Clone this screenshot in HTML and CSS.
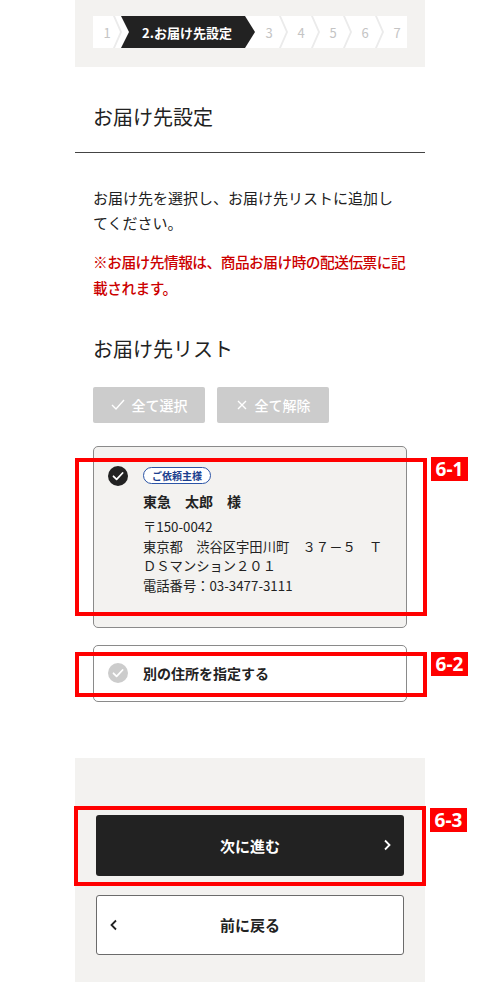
FILE: index.html
```html
<!DOCTYPE html>
<html lang="ja">
  <head>
    <meta charset="utf8" />
    <title>お届け先設定</title>
    <link rel="stylesheet" href="styles.css">
  </head>
  <body>
    <div class="page">
      <div class="step-band">
        <ol class="stepper">
          <li class="step step-first">1</li>
          <li class="step step-active">2.お届け先設定</li>
          <li class="step">3</li>
          <li class="step">4</li>
          <li class="step">5</li>
          <li class="step">6</li>
          <li class="step step-last">7</li>
        </ol>
      </div>

      <h1 class="page-title">お届け先設定</h1>

      <div class="content">
        <p class="lead">お届け先を選択し、お届け先リストに追加してください。</p>
        <p class="notice">※お届け先情報は、商品お届け時の配送伝票に記載されます。</p>

        <h2 class="list-title">お届け先リスト</h2>

        <div class="bulk-actions">
          <button class="bulk-btn">
            <svg width="14" height="12" viewBox="0 0 14 12"><polyline points="1,6 5,10 13,1" /></svg>
            全て選択
          </button>
          <button class="bulk-btn">
            <svg width="12" height="12" viewBox="0 0 12 12"><path d="M2 2 L10 10 M10 2 L2 10" /></svg>
            全て解除
          </button>
        </div>

        <div class="address-card selected">
          <svg class="check" width="20" height="20" viewBox="0 0 20 20">
            <circle cx="10" cy="10" r="10" />
            <polyline points="5.5,10.3 8.6,13.3 14.6,7" />
          </svg>
          <div class="address-body">
            <span class="badge">ご依頼主様</span>
            <p class="name">東急　太郎　様</p>
            <p class="address">〒150-0042<br>東京都　渋谷区宇田川町　３７－５　ＴＤＳマンション２０１<br>電話番号：03-3477-3111</p>
          </div>
          <span class="note-box note-card1"></span>
          <span class="note-label note-card1-label">6-1</span>
        </div>

        <div class="address-card other">
          <svg class="check check-off" width="20" height="20" viewBox="0 0 20 20">
            <circle cx="10" cy="10" r="10" />
            <polyline points="5.5,10.3 8.6,13.3 14.6,7" />
          </svg>
          <span class="other-text">別の住所を指定する</span>
          <span class="note-box note-card2"></span>
          <span class="note-label note-card2-label">6-2</span>
        </div>
      </div>

      <div class="footer-actions">
        <div class="next-wrap">
          <button class="btn-next">
            次に進む
            <svg class="chev chev-right" width="8" height="12" viewBox="0 0 8 12"><polyline points="2,1.5 6.5,6 2,10.5" /></svg>
          </button>
          <span class="note-box note-next"></span>
          <span class="note-label note-next-label">6-3</span>
        </div>
        <button class="btn-back">
          <svg class="chev chev-left" width="8" height="12" viewBox="0 0 8 12"><polyline points="6,1.5 1.5,6 6,10.5" /></svg>
          前に戻る
        </button>
      </div>
    </div>
  </body>
</html>
```

FILE: styles.css
```css
body {
  margin: 0;
  background: #fff;
  color: #222;
  font-family: "Noto Sans CJK JP", "Noto Sans", sans-serif;
}

.page {
  width: 350px;
  margin: 0 auto;
}

/* step indicator */
.step-band {
  background: #f3f2f0;
  padding: 16px 18px 19px;
}
.stepper {
  display: flex;
  margin: 0;
  padding: 0;
  list-style: none;
  height: 32px;
  background: #fff;
}
.step {
  position: relative;
  flex: 0 0 32px;
  display: flex;
  align-items: center;
  justify-content: center;
  box-sizing: border-box;
  color: #c4c4c4;
  font-size: 13px;
  padding-right: 4px;
}
.step::after {
  content: '';
  position: absolute;
  right: -1px;
  top: 0;
  width: 9px;
  height: 100%;
  background: #ebebeb;
  clip-path: polygon(0 0, 2px 0, 9px 50%, 2px 100%, 0 100%, 7px 50%);
}
.step-last {
  flex: 1;
  padding: 0 0 0 4px;
}
.step-last::after {
  display: none;
}
.step-first {
  flex: 0 0 28px;
  padding: 0;
}
.step-active {
  flex: 0 0 134px;
  padding: 0 2px 0 0;
  background: #222;
  color: #fff;
  font-weight: bold;
  clip-path: polygon(0 0, 124px 0, 134px 50%, 124px 100%, 0 100%, 8px 50%);
}
.step-active::after {
  display: none;
}

/* heading */
.page-title {
  margin: 0;
  padding: 35px 18px 20px;
  font-size: 20px;
  line-height: 30px;
  font-weight: normal;
  border-bottom: 1px solid #444;
}

.content {
  padding: 0 18px;
}
.lead {
  margin: 32px 4px 0 0;
  font-size: 15px;
  line-height: 25px;
}
.notice {
  margin: 14px -4px 0 0;
  font-size: 14.7px;
  letter-spacing: -0.5px;
  line-height: 26px;
  color: #cc0000;
  font-weight: 500;
}
.list-title {
  margin: 33px 0 0;
  font-size: 20px;
  line-height: 30px;
  font-weight: normal;
}

.bulk-actions {
  display: flex;
  gap: 12px;
  margin-top: 23px;
}
.bulk-btn {
  width: 112px;
  height: 36px;
  display: flex;
  align-items: center;
  justify-content: center;
  gap: 7px;
  border: none;
  border-radius: 2px;
  background: #cccccc;
  color: #fff;
  font-family: inherit;
  font-size: 14px;
  font-weight: 500;
  padding: 0;
}
.bulk-btn svg {
  fill: none;
  stroke: #fff;
  stroke-width: 1.4;
}

/* address cards */
.address-card {
  position: relative;
  display: flex;
  gap: 15px;
  border: 1px solid #8a8a8a;
  border-radius: 5px;
}
.address-card.selected {
  margin-top: 23px;
  padding: 19px 18px 31px 14px;
  background: #f3f2f0;
  align-items: flex-start;
}
.address-card.other {
  margin-top: 17px;
  height: 57px;
  box-sizing: border-box;
  padding: 0 18px 0 14px;
  align-items: center;
  background: #fff;
}
.check {
  flex: none;
}
.check circle {
  fill: #222;
}
.check polyline {
  fill: none;
  stroke: #fff;
  stroke-width: 1.8;
  stroke-linecap: round;
  stroke-linejoin: round;
}
.check-off circle {
  fill: #cccccc;
}
.address-body {
  flex: 1;
}
.badge {
  display: block;
  width: fit-content;
  margin-top: 1px;
  padding: 0 8px;
  border: 1px solid #2b54a6;
  border-radius: 9px;
  background: #fff;
  color: #1c3f8e;
  font-size: 10px;
  line-height: 15px;
  font-weight: bold;
}
.name {
  margin: 7px 0 0;
  font-size: 14px;
  line-height: 20px;
  font-weight: bold;
}
.address {
  margin: 6px 0 0;
  font-size: 13.3px;
  line-height: 19.7px;
}
.other-text {
  font-size: 14px;
  font-weight: bold;
}

/* footer buttons */
.footer-actions {
  margin-top: 56px;
  padding: 57px 21px 27px;
  background: #f3f2f0;
}
.next-wrap {
  position: relative;
}
.btn-next,
.btn-back {
  position: relative;
  display: flex;
  align-items: center;
  justify-content: center;
  width: 100%;
  font-family: inherit;
  font-size: 15px;
  font-weight: bold;
  border-radius: 3px;
  padding: 0;
}
.btn-next {
  height: 61px;
  border: none;
  background: #222;
  color: #fff;
}
.btn-back {
  height: 60px;
  margin-top: 19px;
  border: 1px solid #6b6b6b;
  background: #fff;
  color: #222;
}
.chev {
  position: absolute;
  top: 50%;
  margin-top: -6px;
  fill: none;
  stroke-width: 1.8;
}
.chev-right {
  right: 13px;
  stroke: #fff;
}
.chev-left {
  left: 13px;
  stroke: #222;
}

/* red annotation marks */
.note-box {
  position: absolute;
  border: 4px solid #ff0000;
  box-sizing: border-box;
  pointer-events: none;
}
.note-label {
  position: absolute;
  width: 37px;
  height: 24px;
  background: #ff0000;
  color: #fff;
  font-family: "Noto Sans", sans-serif;
  font-size: 19px;
  line-height: 24px;
  font-weight: bold;
  text-align: center;
}
.note-card1 {
  left: -19px;
  top: 11px;
  width: 352px;
  height: 158px;
}
.note-card1-label {
  left: 337px;
  top: 10px;
}
.note-card2 {
  left: -19px;
  top: 6px;
  width: 352px;
  height: 45px;
}
.note-card2-label {
  left: 337px;
  top: 6px;
}
.note-next {
  left: -22px;
  top: -9px;
  width: 352px;
  height: 80px;
}
.note-next-label {
  left: 334px;
  top: -7px;
}
```
